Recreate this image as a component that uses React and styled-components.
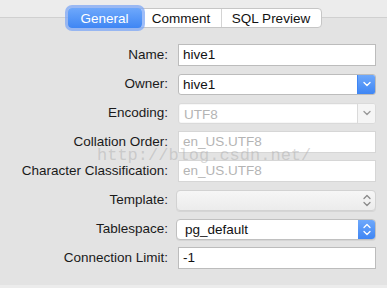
import React from "react";
import styled, { createGlobalStyle } from "styled-components";

const Global = createGlobalStyle`
  html, body { margin: 0; padding: 0; }
  body {
    width: 387px; height: 288px; overflow: hidden;
    background: #e3e3e3;
    font-family: "Liberation Sans", Arial, sans-serif;
    -webkit-font-smoothing: antialiased;
  }
`;

const Page = styled.div`
  position: relative;
  width: 387px;
  height: 288px;
  background: #e3e3e3;
  display: flex;
  flex-direction: column;
`;

const Header = styled.div`
  height: 36px;
  display: flex;
  justify-content: center;
  align-items: flex-start;
  padding-top: 8px;
  padding-left: 2px;
  box-sizing: border-box;
  background: linear-gradient(#ececec 0 17px, #d0d0d0 17px 18px, #e3e3e3 18px);
`;

const Segmented = styled.div`
  display: flex;
  height: 20px;
  box-sizing: border-box;
  background: #fff;
  border: 1px solid #c6c6c6;
  border-radius: 4px;
`;

const Tab = styled.div`
  width: ${(p) => p.$w}px;
  height: 100%;
  display: flex;
  align-items: center;
  justify-content: center;
  font-size: 13.5px;
  color: ${(p) => (p.$active ? "#fff" : "#111")};
  border-left: ${(p) => (p.$divider ? "1px solid #d4d4d4" : "none")};
  box-sizing: border-box;
  ${(p) =>
    p.$active &&
    `
    margin: -1px 0 -1px -1px;
    height: 20px;
    border-radius: 4px;
    background: linear-gradient(#6ea8fb, #3f86f4);
    box-shadow: 0 0 0 3px rgba(125, 167, 245, 0.75);
  `}
`;

const Form = styled.div`
  display: grid;
  grid-template-columns: 168px 198px;
  column-gap: 10px;
  row-gap: 7px;
  padding-top: 8px;
  align-items: center;
`;

const Label = styled.div`
  text-align: right;
  font-size: 13.5px;
  color: #1a1a1a;
  white-space: nowrap;
  height: 22px;
  line-height: 22px;
`;

const TextBox = styled.div`
  height: 22px;
  box-sizing: border-box;
  background: #fff;
  border: 1px solid ${(p) => (p.$disabled ? "#d6d6d6" : "#bcbcbc")};
  padding: 0 4px;
  font-size: 13.5px;
  line-height: 20px;
  color: ${(p) => (p.$disabled ? "#b4b4b4" : "#111")};
`;

const Combo = styled.div`
  height: 21px;
  box-sizing: border-box;
  display: flex;
  background: ${(p) => (p.$disabled ? "#f7f7f7" : "#fff")};
  border: 1px solid ${(p) => (p.$disabled ? "#dadada" : "#bcbcbc")};
  border-radius: 3px;
  overflow: hidden;
`;

const ComboText = styled.div`
  flex: 1;
  padding: 0 4px;
  font-size: 13.5px;
  line-height: 19px;
  color: ${(p) => (p.$disabled ? "#b4b4b4" : "#111")};
  background: ${(p) => (p.$disabled ? "#fff" : "transparent")};
  margin: ${(p) => (p.$disabled ? "1px 0 1px 1px" : "0")};
`;

const ComboButton = styled.div`
  width: 17px;
  display: flex;
  align-items: center;
  justify-content: center;
  border-left: 1px solid ${(p) => (p.$blue ? "#3f86f4" : "#dadada")};
  background: ${(p) => (p.$blue ? "linear-gradient(#6ea8fb, #3f86f4)" : "#f5f5f5")};
`;

const Popup = styled.div`
  height: 21px;
  margin-left: -2px;
  width: 200px;
  box-sizing: border-box;
  display: flex;
  border-radius: 4px;
  border: 1px solid ${(p) => (p.$blue ? "#c0c0c0" : "#d2d2d2")};
  background: ${(p) => (p.$blue ? "#fff" : "linear-gradient(#f6f6f6, #ececec)")};
  box-shadow: 0 1px 0 rgba(0,0,0,0.06);
  overflow: hidden;
`;

const PopupText = styled.div`
  flex: 1;
  padding: 0 8px;
  font-size: 13.5px;
  line-height: 19px;
  color: #111;
`;

const PopupButton = styled.div`
  width: 17px;
  display: flex;
  align-items: center;
  justify-content: center;
  background: ${(p) => (p.$blue ? "linear-gradient(#6ea8fb, #3f86f4)" : "transparent")};
`;

const Watermark = styled.div`
  position: absolute;
  left: 97px;
  top: 146px;
  font-family: "Liberation Mono", "Courier New", monospace;
  font-size: 17px;
  color: rgba(170, 170, 170, 0.45);
  pointer-events: none;
  white-space: nowrap;
`;

const Footer = styled.div`
  margin-top: auto;
  height: 3px;
  background: #ececec;
`;

const ChevronDown = ({ color }) => (
  <svg width="8" height="6" viewBox="0 0 8 6">
    <path d="M1 1.5 L4 4.5 L7 1.5" fill="none" stroke={color} strokeWidth="1.4" strokeLinecap="round" strokeLinejoin="round" />
  </svg>
);

const UpDown = ({ color }) => (
  <svg width="8" height="13" viewBox="0 0 8 13">
    <path d="M1 4.5 L4 1.5 L7 4.5" fill="none" stroke={color} strokeWidth="1.3" strokeLinecap="round" strokeLinejoin="round" />
    <path d="M1 8.5 L4 11.5 L7 8.5" fill="none" stroke={color} strokeWidth="1.3" strokeLinecap="round" strokeLinejoin="round" />
  </svg>
);

export default function App() {
  return (
    <>
      <Global />
      <Page>
        <Header>
          <Segmented>
            <Tab $w={74} $active>General</Tab>
            <Tab $w={79}>Comment</Tab>
            <Tab $w={100} $divider>SQL Preview</Tab>
          </Segmented>
        </Header>
        <Form>
          <Label>Name:</Label>
          <TextBox>hive1</TextBox>

          <Label>Owner:</Label>
          <Combo>
            <ComboText>hive1</ComboText>
            <ComboButton $blue>
              <ChevronDown color="#fff" />
            </ComboButton>
          </Combo>

          <Label>Encoding:</Label>
          <Combo $disabled>
            <ComboText $disabled>UTF8</ComboText>
            <ComboButton>
              <ChevronDown color="#9a9a9a" />
            </ComboButton>
          </Combo>

          <Label>Collation Order:</Label>
          <TextBox $disabled>en_US.UTF8</TextBox>

          <Label>Character Classification:</Label>
          <TextBox $disabled>en_US.UTF8</TextBox>

          <Label>Template:</Label>
          <Popup>
            <PopupText></PopupText>
            <PopupButton>
              <UpDown color="#8a8a8a" />
            </PopupButton>
          </Popup>

          <Label>Tablespace:</Label>
          <Popup $blue>
            <PopupText>pg_default</PopupText>
            <PopupButton $blue>
              <UpDown color="#fff" />
            </PopupButton>
          </Popup>

          <Label>Connection Limit:</Label>
          <TextBox>-1</TextBox>
        </Form>
        <Watermark>http://blog.csdn.net/</Watermark>
        <Footer />
      </Page>
    </>
  );
}
